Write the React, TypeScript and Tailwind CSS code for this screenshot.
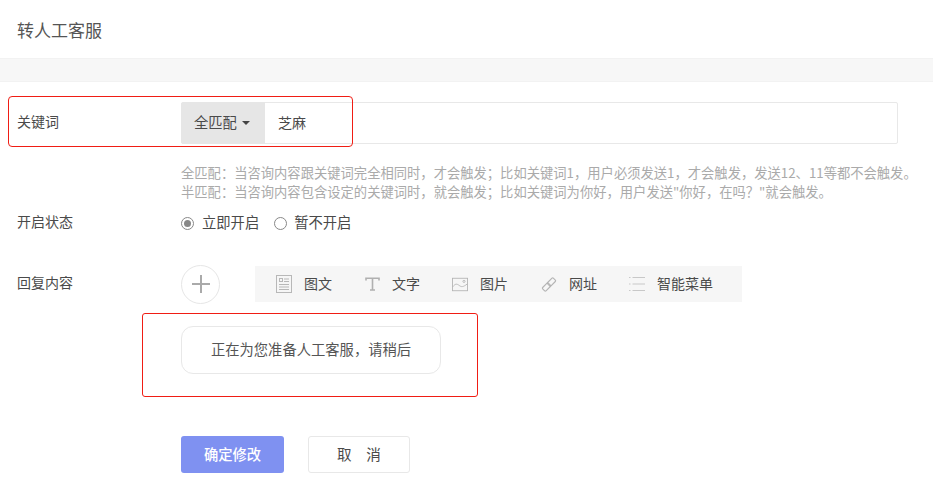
import React from 'react';

const font = { fontFamily: '"Noto Sans CJK SC", "Noto Sans", sans-serif' };

const IconArticle = () => (
  <svg width="16" height="18" viewBox="0 0 16 18" fill="none" stroke="#b8b8b8" strokeWidth="1">
    <rect x="0.5" y="0.5" width="15" height="17" />
    <rect x="3.5" y="3.5" width="3" height="3" />
    <path d="M8 4h5M8 6.500h5M3 9.500h10M3 12h10M3 14.500h10" />
  </svg>
);

const IconText = () => (
  <svg width="15" height="14" viewBox="0 0 15 14" fill="none" stroke="#b0b0b0" strokeWidth="1.600">
    <path d="M1 3.500V1.200h13v2.300M7.500 1.200V13M5 13h5" />
  </svg>
);

const IconImage = () => (
  <svg width="18" height="15" viewBox="0 0 18 15" fill="none" stroke="#b4b4b4" strokeWidth="1">
    <rect x="0.5" y="0.5" width="17" height="14" />
    <circle cx="13.500" cy="4" r="1.200" />
    <path d="M1 10c2.500-3.500 4.500-3.500 7-1.500s4.500 2 9-1.500" />
  </svg>
);

const IconLink = () => (
  <svg width="17" height="17" viewBox="0 0 17 17" fill="none" stroke="#b4b4b4" strokeWidth="1.200">
    <g transform="rotate(-45 8.500 8.500)">
      <rect x="0.500" y="6" width="8.500" height="5" rx="1" />
      <rect x="8" y="6" width="8.500" height="5" rx="1" />
    </g>
  </svg>
);

const IconMenu = () => (
  <svg width="16" height="16" viewBox="0 0 16 16" fill="none" stroke="#c8c8c8" strokeWidth="1">
    <path d="M0 1.500h1.500M3.500 1.500h12.500M0 8h1.500M3.500 8h12.500M0 14.500h1.500M3.500 14.500h12.500" />
  </svg>
);

const tools = [
  { label: '图文', icon: <IconArticle />, gap: 'gap-[12px]', width: 'w-[88px]' },
  { label: '文字', icon: <IconText />, gap: 'gap-[12px]', width: 'w-[88px]' },
  { label: '图片', icon: <IconImage />, gap: 'gap-[12px]', width: 'w-[89px]' },
  { label: '网址', icon: <IconLink />, gap: 'gap-[12px]', width: 'w-[88px]' },
  { label: '智能菜单', icon: <IconMenu />, gap: 'gap-[12px]', width: 'w-auto' },
];

export default function App() {
  return (
    <div className="relative w-[933px] h-[484px] overflow-hidden bg-white text-[#4a4a4a] text-[14px]" style={font}>
      <div className="h-[59px] pl-[17px] pt-[18px] text-[17px] leading-[24px] text-[#555] border-b border-[#f2f2f2]">
        转人工客服
      </div>
      <div className="h-[23px] bg-[#f7f7f7] border-b border-[#f2f2f2]" />

      <div className="pl-[17px] pt-[20px]">
        <div className="flex items-center h-[42px]">
          <div className="w-[164px] pb-[4px]">关键词</div>
          <div className="flex w-[717px] h-[42px] border border-[#e8e8e8] rounded-[2px]">
            <div className="flex items-center box-border w-[84px] h-[42px] -ml-px -mt-px bg-[#e6e6e6] rounded-l-[3px] pl-[13px] pb-[2px] text-[14.3px]">
              全匹配
              <span className="w-0 h-0 ml-[5px] mt-[2px] border-x-[4px] border-x-transparent border-t-[4px] border-t-[#444]" />
            </div>
            <div className="flex items-center pl-[13px] pb-[2px]">芝麻</div>
          </div>
        </div>

        <div className="ml-[164px] mt-[19px] text-[13.3px] leading-[19px] text-[#aaa] whitespace-nowrap">
          <div>全匹配：当咨询内容跟关键词完全相同时，才会触发；比如关键词1，用户必须发送1，才会触发，发送12、11等都不会触发。</div>
          <div>半匹配：当咨询内容包含设定的关键词时，就会触发；比如关键词为你好，用户发送"你好，在吗？"就会触发。</div>
        </div>

        <div className="flex items-center h-[24px] mt-[10px]">
          <div className="w-[164px] pb-[4px]">开启状态</div>
          <div className="flex items-center">
            <span className="flex items-center justify-center w-[13px] h-[13px] rounded-full border border-[#888]">
              <span className="w-[7px] h-[7px] rounded-full bg-[#888]" />
            </span>
            <span className="ml-[8px] pb-[3px] text-[14.3px]">立即开启</span>
            <span className="ml-[15px] w-[13px] h-[13px] rounded-full border border-[#888]" />
            <span className="ml-[7px] pb-[3px] text-[14.3px]">暂不开启</span>
          </div>
        </div>

        <div className="flex items-center h-[38px] mt-[30px]">
          <div className="w-[164px] pb-[4px]">回复内容</div>
          <button className="flex items-center justify-center w-[39px] h-[39px] rounded-full border border-[#e6e6e6]">
            <svg width="20" height="20" viewBox="0 0 20 20" stroke="#aaa" strokeWidth="2">
              <path d="M10 1v18M1 10h18" />
            </svg>
          </button>
          <div className="flex items-center w-[487px] h-[36px] ml-[35px] pl-[21px] bg-[#f6f6f6]">
            {tools.map((tool) => (
              <div key={tool.label} className={`flex items-center ${tool.gap} ${tool.width}`}>
                <span className="flex items-center justify-center w-[16px]">{tool.icon}</span>
                <span className="pb-[2px]">{tool.label}</span>
              </div>
            ))}
          </div>
        </div>

        <div className="flex items-center justify-center ml-[164px] mt-[23px] w-[260px] h-[48px] pb-[2px] border border-[#e8e8e8] rounded-[12px] text-[14.3px] text-[#555]">
          正在为您准备人工客服，请稍后
        </div>

        <div className="flex ml-[164px] mt-[62px] gap-[24px]">
          <button className="w-[103px] h-[37px] pb-[2px] rounded-[3px] bg-[#7f91f1] text-white text-[14.3px] font-medium">确定修改</button>
          <button className="w-[102px] h-[37px] pb-[2px] rounded-[3px] border border-[#e8e8e8] text-[14.6px]">取　消</button>
        </div>
      </div>

      {/* annotation boxes */}
      <div className="absolute left-[8px] top-[96px] w-[345px] h-[51px] border border-[#f01d14] rounded-[4px]" />
      <div className="absolute left-[142px] top-[313px] w-[336px] h-[84px] border border-[#f01d14] rounded-[3px]" />
    </div>
  );
}
